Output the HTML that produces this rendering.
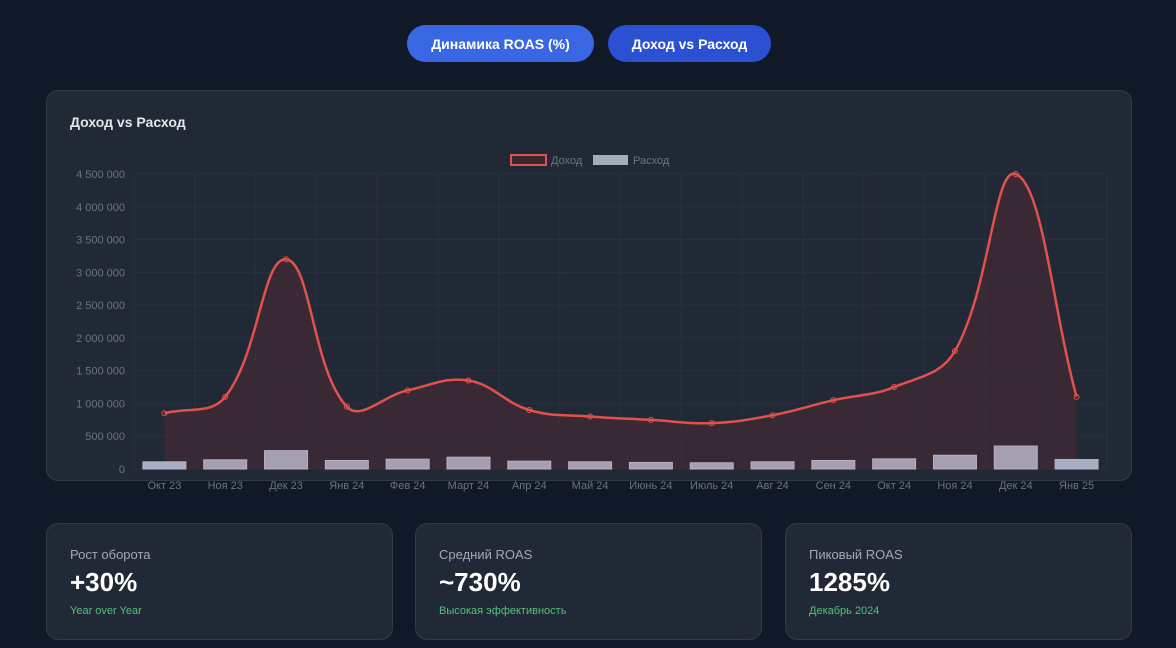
<!DOCTYPE html>
<html><head><meta charset="utf-8"><style>
*{margin:0;padding:0;box-sizing:border-box}
body{width:1176px;height:648px;background:#111827;font-family:"Liberation Sans",sans-serif;position:relative;overflow:hidden}
.btn{position:absolute;top:25px;height:37px;border-radius:19px;color:#fff;font-weight:bold;font-size:14px;display:flex;align-items:center;justify-content:center}
.card{position:absolute;background:#222936;border:1px solid #323a48;border-radius:12px}
.t{position:absolute;left:23px;top:23px;color:#e2e5ea;font-weight:bold;font-size:14px}
.sl{position:absolute;left:23px;top:23px;color:#a3a9b4;font-size:13px}
.sv{position:absolute;left:23px;top:43px;color:#fff;font-weight:bold;font-size:26px}
.ss{position:absolute;left:23px;top:81px;font-size:11px;color:#52c17f}
svg{position:absolute;left:0;top:0}
</style></head><body>
<div class="btn" style="left:407px;width:187px;background:#3966e3">Динамика ROAS (%)</div>
<div class="btn" style="left:608px;width:163px;background:#2c50d2">Доход vs Расход</div>
<div class="card" style="left:46px;top:90px;width:1086px;height:391px"><div class="t">Доход vs Расход</div></div>
<div class="card" style="left:46px;top:523px;width:347px;height:117px"><div class="sl">Рост оборота</div><div class="sv">+30%</div><div class="ss">Year over Year</div></div>
<div class="card" style="left:415px;top:523px;width:347px;height:117px"><div class="sl">Средний ROAS</div><div class="sv">~730%</div><div class="ss">Высокая эффективность</div></div>
<div class="card" style="left:785px;top:523px;width:347px;height:117px"><div class="sl">Пиковый ROAS</div><div class="sv">1285%</div><div class="ss">Декабрь 2024</div></div>
<svg id="c" width="1176" height="648" font-family="Liberation Sans, sans-serif"></svg>
<script>
var L=134,R=1107,B=469,T=174,n=16,w=(R-L)/n;
var rev=[850,1100,3200,950,1200,1350,900,800,750,700,820,1050,1250,1800,4500,1100];
var exp=[110,140,280,130,150,180,120,110,100,95,110,130,155,210,350,145];
var lab=["Окт 23","Ноя 23","Дек 23","Янв 24","Фев 24","Март 24","Апр 24","Май 24","Июнь 24","Июль 24","Авг 24","Сен 24","Окт 24","Ноя 24","Дек 24","Янв 25"];
function y(v){return B-(v/4500)*(B-T)}
function cx(i){return L+w*(i+.5)}
var s='';
for(var k=0;k<=9;k++){var yy=y(k*500);s+='<line x1="'+L+'" x2="'+R+'" y1="'+yy+'" y2="'+yy+'" stroke="#283040" stroke-width="1"/>';
var t=k==0?'0':(k*500000).toLocaleString('ru-RU').replace(/\s/g,' ');
s+='<text x="125" y="'+(yy+4)+'" fill="#6b7383" font-size="11" text-anchor="end">'+t+'</text>';}
for(var i=0;i<=n;i++){var xx=L+w*i;s+='<line x1="'+xx+'" x2="'+xx+'" y1="'+T+'" y2="'+B+'" stroke="#283040"/>';}
var P=rev.map(function(v,i){return [cx(i),y(v)]});
var cp=P.map(function(c,i){var p=P[i-1]||c,nx=P[i+1]||c;
var d01=Math.hypot(c[0]-p[0],c[1]-p[1]),d12=Math.hypot(nx[0]-c[0],nx[1]-c[1]);
var s01=d01/(d01+d12)||0,s12=d12/(d01+d12)||0,fa=0.4*s01,fb=0.4*s12;
return {pr:[c[0]-fa*(nx[0]-p[0]),c[1]-fa*(nx[1]-p[1])],nx:[c[0]+fb*(nx[0]-p[0]),c[1]+fb*(nx[1]-p[1])]};});
var d='M'+P[0][0]+','+P[0][1];
for(var i=0;i<n-1;i++){d+=' C'+cp[i].nx[0]+','+cp[i].nx[1]+' '+cp[i+1].pr[0]+','+cp[i+1].pr[1]+' '+P[i+1][0]+','+P[i+1][1];}
s+='<path d="'+d+' L'+P[n-1][0]+','+B+' L'+P[0][0]+','+B+'Z" fill="#4a2a35" fill-opacity="0.55"/>';
exp.forEach(function(v,i){var c=(i==0||i==15)?'#a7aec1':'#a59fb2';s+='<rect x="'+(cx(i)-21.5)+'" y="'+y(v)+'" width="43" height="'+(B-y(v))+'" fill="'+c+'" stroke="#b6b0c2" stroke-width="1"/>';});
s+='<path d="'+d+'" fill="none" stroke="#e0524b" stroke-width="2.5"/>';
P.forEach(function(p){s+='<circle cx="'+p[0]+'" cy="'+p[1]+'" r="2.5" fill="none" stroke="#e0524b" stroke-width="1"/>';});
lab.forEach(function(l,i){s+='<text x="'+cx(i)+'" y="489" fill="#6b7383" font-size="11" text-anchor="middle">'+l+'</text>';});
s+='<rect x="511" y="155" width="35" height="10" fill="#3a2630" stroke="#e0524b" stroke-width="2"/><text x="551" y="164" fill="#6b7383" font-size="11">Доход</text>';
s+='<rect x="593" y="155" width="35" height="10" fill="#a3acbd"/><text x="633" y="164" fill="#6b7383" font-size="11">Расход</text>';
document.getElementById('c').innerHTML=s;
</script>
</body></html>
